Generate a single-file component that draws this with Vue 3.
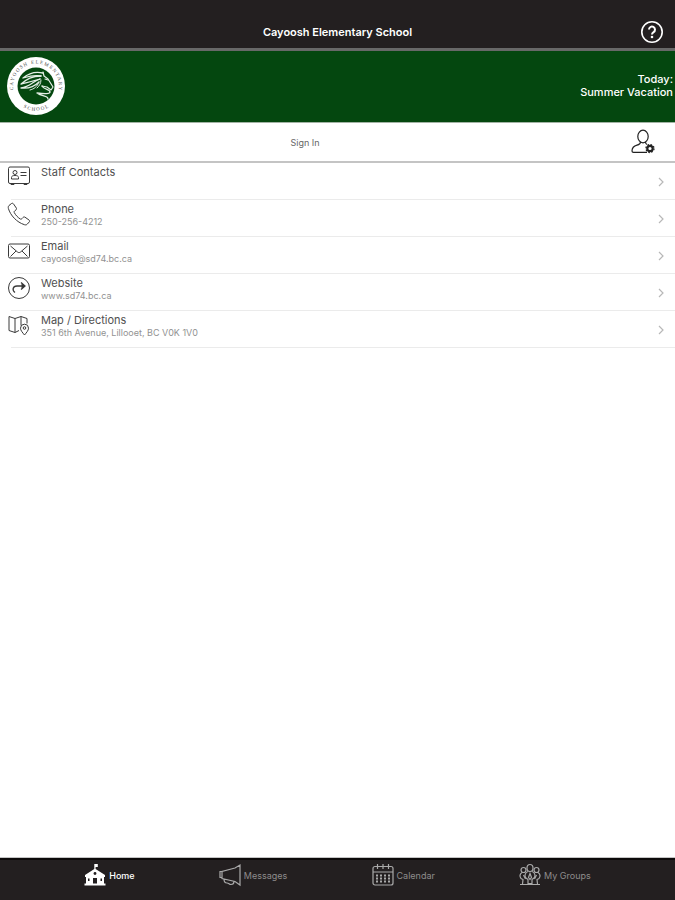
<template>
  <div class="app">
    <header class="topbar">
      <h1>Cayoosh Elementary School</h1>
      <button type="button" class="help" aria-label="Help">
        <svg width="24" height="24" viewBox="0 0 24 24" fill="none" stroke="#fff">
          <circle cx="12" cy="12" r="10.2" stroke-width="1.6" />
          <path d="M9 9.6a3 3 0 1 1 4.6 2.5c-1.1.7-1.6 1.2-1.6 2.4" stroke-width="2" />
          <circle cx="12" cy="17" r="1.3" fill="#fff" stroke="none" />
        </svg>
      </button>
    </header>

    <section class="banner">
      <svg class="logo" width="60" height="60" viewBox="0 0 60 60">
        <defs>
          <path id="arcTop" d="M9 40a23 23 0 1 1 42 0" />
          <path id="arcBottom" d="M14 49a25 25 0 0 0 32 0" />
        </defs>
        <circle cx="30" cy="30" r="29" fill="#fff" />
        <circle cx="30" cy="30" r="18.5" fill="#04470f" />
        <text class="logo-text" text-anchor="middle"><textPath href="#arcTop" startOffset="50%">C A Y O O S H &#160; E L E M E N T A R Y</textPath></text>
        <text class="logo-text" text-anchor="middle"><textPath href="#arcBottom" startOffset="50%">S C H O O L</textPath></text>
        <g fill="none" stroke="#e4eee5" stroke-linecap="round" stroke-linejoin="round">
          <path d="M37 16l1 4 4 3 5 8-2 3-4-3-5-1" stroke-width="1.2" />
          <path d="M37 17c-8-2-14 0-20 5 7-2 12-3 18-2" stroke-width="1.3" />
          <path d="M35 20c-9 0-14 3-20 8 8-2 13-3 19-5" stroke-width="1.3" />
          <path d="M34 23c-7 2-10 8-19 9 8 1 14-2 18-6" stroke-width="1.3" />
          <path d="M33 26c-2 5-5 7-9 8M35 24c0 4-2 6-4 8" stroke-width="1" />
          <path d="M36 30c2 4 8 3 8 6 0 2-5 2-13 1 5 4 11 2 11 6" stroke-width="1.3" />
          <path d="M39 23l3 1" stroke-width="1.2" />
        </g>
      </svg>
      <p class="today">Today:<br />Summer Vacation</p>
    </section>

    <section class="account">
      <button type="button" class="signin">Sign In</button>
      <button type="button" class="profile" aria-label="Account settings">
        <svg width="26" height="26" viewBox="0 0 26 26" fill="none" stroke="#222" stroke-width="1.2">
          <ellipse cx="13" cy="7.5" rx="5.2" ry="6.3" />
          <path d="M10.5 13c0 2-1 2.500-3.500 3.200-3.500 1-5 2.300-5 5.800 0 1 .3 1.400 1.500 1.400H17M15.500 13c0 1.500.5 2 1.500 2.500" />
          <circle cx="20" cy="19.5" r="2.7" stroke-width="2.2" />
          <circle cx="20" cy="19.5" r="4" stroke-width="1.3" stroke-dasharray="1.6 1.54" />
        </svg>
      </button>
    </section>

    <main class="list">
      <a v-for="item in items" :key="item.title" class="row" href="#">
        <svg class="row-icon" width="24" height="24" viewBox="0 0 24 24">
          <g v-if="item.icon === 'card'">
            <rect x="1.5" y="2" width="21" height="16.5" rx="1.5" />
            <circle cx="8" cy="7.5" r="2" />
            <path d="M4.500 14v-1.500c0-1.500 1.500-2 3.500-2s3.500.5 3.500 2V14zM13.500 7.500h6M13.500 10.500h6M4 18.500v1h3v-1M17 18.500v1h3v-1" />
          </g>
          <path
            v-else-if="item.icon === 'phone'"
            d="M2 3.500L4.500 1.500c.8-.5 1.500-.3 2 .4L9.300 6c.4.7.3 1.400-.3 1.900L7.600 9c-.6.500-.6 1.100-.2 1.800 1.400 2.500 3.300 4.500 5.700 6.100.7.400 1.300.4 1.800-.2l1.200-1.300c.5-.6 1.200-.6 1.900-.2l4 2.800c.7.500.8 1.200.3 1.900l-2 2.200c-.7.800-1.700 1-2.900.6C9.700 20.200 3.500 13.500 1.400 6.500c-.3-1.200-.2-2.300.6-3z"
          />
          <g v-else-if="item.icon === 'mail'">
            <rect x="1.5" y="5" width="21" height="14" rx="1.5" />
            <path d="M3.500 7l7 6c1 .8 2 .8 3 0l7-6M3.500 17.500l5.500-5.500M20.500 17.500L15 12" />
          </g>
          <g v-else-if="item.icon === 'web'">
            <circle cx="12" cy="12" r="10.5" />
            <path d="M8 16.500c-3-2-2.500-6.500 2-6.500h7M14 6.500l4 3.500-4 3.500" stroke-width="1.3" />
            <path d="M15 8l3 2-3 2z" class="solid" />
          </g>
          <g v-else>
            <path d="M12 17.500L8 19.500l-6-2V3.500l6 2 6-2 6 2v5M8 5.500v14M14 3.500v9" />
            <path d="M17.500 22c-2-2.500-4-4.500-4-6.800a4 4 0 0 1 8 0c0 2.300-2 4.300-4 6.800z" />
            <circle cx="17.5" cy="15" r="1.3" />
          </g>
        </svg>
        <span class="row-text">
          <span class="row-title">{{ item.title }}</span>
          <span v-if="item.detail" class="row-detail">{{ item.detail }}</span>
        </span>
        <svg class="chevron" width="6" height="10" viewBox="0 0 6 10">
          <path d="M1 1l4 4-4 4" fill="none" stroke="#b8b8b8" stroke-width="1.2" />
        </svg>
      </a>
    </main>

    <nav class="tabs">
      <a v-for="tab in tabs" :key="tab.label" href="#" class="tab" :class="{ active: tab.active }">
        <svg width="22" height="24" viewBox="1 0 22 24">
          <g v-if="tab.icon === 'home'" fill="#fff">
            <path d="M11.300 1h3.500v3h-2.200v2L22 12v2h-1v7.500H3V14H2v-2l9.300-6z" />
            <circle cx="12" cy="10.5" r="1.4" fill="#231f20" />
            <path d="M10 21.500V15h4v6.500zM5 15.500h1.500V18H5zM17.500 15.500H19V18h-1.500z" fill="#231f20" />
            <path d="M1.500 20.500h21v2h-21z" />
          </g>
          <g v-else-if="tab.icon === 'messages'" class="line">
            <path d="M22 2v20L17 18.500 4 15.500V8.500L17 5zM4 8.500H2v6h2M6 16c0 2.500 1 4 3 4s2 1.500 4 1.500 3-1 3-3" />
          </g>
          <g v-else-if="tab.icon === 'calendar'" class="line">
            <rect x="2" y="3.5" width="20" height="18.5" rx="2" />
            <path d="M2 9h20M6.500 1v5M17.500 1v5M12 1v5" />
            <path d="M5 12.500h14M5 15.500h14M5 18.500h14" stroke-width="2" stroke-dasharray="2 2" />
          </g>
          <g v-else class="line">
            <ellipse cx="12" cy="5" rx="3" ry="3.5" />
            <circle cx="5.5" cy="7" r="2.5" />
            <circle cx="18.500" cy="7" r="2.500" />
            <path d="M10 8.500c-3 1-3.500 4-2.500 6l2.500 2v4h4v-4l2.500-2c1-2 .5-5-2.500-6M12 10.500l-1.500 4 1.500 2 1.500-2z" />
            <path d="M4 9.500c-2.500 1.500-2.500 4-1 6l2 1-.5 4.500M20 9.500c2.500 1.500 2.500 4 1 6l-2 1 .5 4.500M2 21.500h20M5.500 12l2 4M18.500 12l-2 4" />
          </g>
        </svg>
        <span>{{ tab.label }}</span>
      </a>
    </nav>
  </div>
</template>

<script setup>
const items = [
  { title: 'Staff Contacts', icon: 'card' },
  { title: 'Phone', detail: '250-256-4212', icon: 'phone' },
  { title: 'Email', detail: 'cayoosh@sd74.bc.ca', icon: 'mail' },
  { title: 'Website', detail: 'www.sd74.bc.ca', icon: 'web' },
  { title: 'Map / Directions', detail: '351 6th Avenue, Lillooet, BC V0K 1V0', icon: 'map' }
]

const tabs = [
  { label: 'Home', icon: 'home', active: true },
  { label: 'Messages', icon: 'messages' },
  { label: 'Calendar', icon: 'calendar' },
  { label: 'My Groups', icon: 'groups' }
]
</script>

<style>
body {
  margin: 0;
  background: #fff;
}
</style>

<style scoped>
.app {
  display: flex;
  flex-direction: column;
  min-height: 100vh;
  font-family: Inter, "Liberation Sans", sans-serif;
  font-size: 11px;
  color: #505050;
}

button {
  border: 0;
  padding: 0;
  background: none;
  font-family: inherit;
  cursor: pointer;
}

a {
  color: inherit;
  text-decoration: none;
}

svg {
  display: block;
  flex-shrink: 0;
}

.topbar {
  display: grid;
  grid-template-columns: 1fr auto 1fr;
  align-items: center;
  padding: 20px 11px 4px;
  background: #231f20;
  border-bottom: 3px solid #686868;
}

h1 {
  grid-column: 2;
  margin: 0;
  font-size: 11px;
  font-weight: 600;
  color: #fff;
}

.help {
  justify-self: end;
}

.banner {
  display: flex;
  align-items: center;
  justify-content: space-between;
  padding: 5px 2px 6px 6px;
  background: #04470f;
  border-bottom: 1px solid #a3b3a5;
}

.logo-text {
  font-family: "Liberation Serif", serif;
  font-size: 5px;
  fill: #444;
}

.today {
  margin: 0;
  font-size: 11px;
  font-weight: 500;
  line-height: 13px;
  text-align: right;
  color: #fff;
}

.account {
  display: flex;
  height: 38px;
  border-bottom: 2px solid #c4c4c4;
}

.signin {
  flex: 1;
  font-size: 9px;
  color: #666;
}

.profile {
  display: flex;
  align-items: center;
  justify-content: center;
  width: 65px;
}

.list {
  flex: 1;
}

.row {
  display: flex;
  align-items: center;
  height: 37px;
  padding: 0 11px 0 7px;
  background: linear-gradient(#ebebeb, #ebebeb) 11px 100% / 100% 1px no-repeat;
}

.row-icon {
  align-self: flex-start;
  margin-top: 2px;
  fill: none;
  stroke: #3a3a3a;
  stroke-width: 1;
}

.solid {
  fill: #333;
}

.row-text {
  display: flex;
  flex: 1;
  flex-direction: column;
  align-self: flex-start;
  padding: 3px 0 0 10px;
}

.row-title {
  font-size: 11px;
  line-height: 13px;
}

.row-detail {
  font-size: 9px;
  line-height: 11px;
  color: #929292;
}

.tabs {
  display: flex;
  justify-content: space-evenly;
  height: 40px;
  background: #231f20;
  border-top: 2px solid #0c0a0a;
  box-shadow: 0 -1px #c4c4c4;
}

.tab {
  display: flex;
  align-items: center;
  gap: 3px;
  height: 30px;
  font-size: 9px;
  color: #8e8c8c;
}

.active {
  font-weight: 500;
  color: #fff;
}

.line {
  fill: none;
  stroke: #aaa;
  stroke-width: 1.2;
}
</style>
